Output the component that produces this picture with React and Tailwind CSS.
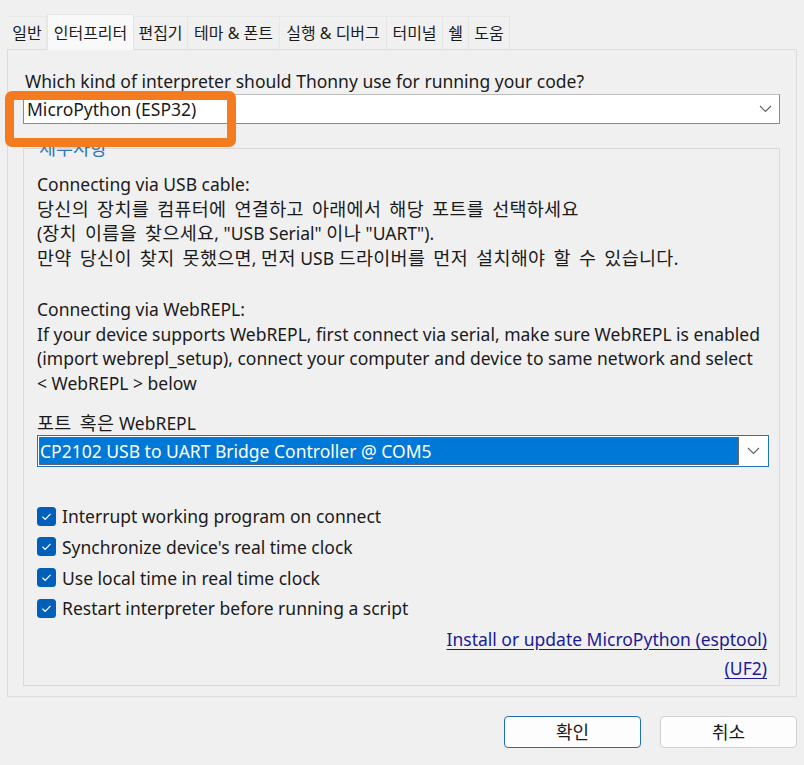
import React from 'react';

const tabs = [
  { label: '일반', w: 'w-[39px]' },
  { label: '인터프리터', w: 'w-[87px]', active: true },
  { label: '편집기', w: 'w-[54px]' },
  { label: '테마 & 폰트', w: 'w-[92px]' },
  { label: '실행 & 디버그', w: 'w-[107px]' },
  { label: '터미널', w: 'w-[56px]' },
  { label: '쉘', w: 'w-[26px]' },
  { label: '도움', w: 'w-[41px]' },
];

const options = [
  'Interrupt working program on connect',
  "Synchronize device's real time clock",
  'Use local time in real time clock',
  'Restart interpreter before running a script',
];

// Korean runs are drawn a bit larger with wider spaces, like Malgun Gothic in the original
const Mixed = ({ text }) => {
  const parts = text.split(/([\uAC00-\uD7A3](?:[\uAC00-\uD7A3\s]*[\uAC00-\uD7A3])?)/);
  return parts.map((p, i) =>
    /[\uAC00-\uD7A3]/.test(p) ? (
      <span key={i} className="text-[18.5px] tracking-[0.3px] [word-spacing:3px]">{p}</span>
    ) : (
      <span key={i}>{p}</span>
    )
  );
};

const Chevron = () => (
  <svg width="13" height="8" viewBox="0 0 13 8" fill="none">
    <polyline points="1,1 6.5,6.5 12,1" stroke="#5f5f5f" strokeWidth="1.1" />
  </svg>
);

const CheckBox = () => (
  <svg width="19" height="19" viewBox="0 0 19 19">
    <rect x="0" y="0" width="19" height="19" rx="3.5" fill="#005fb8" />
    <polyline points="5.5,9.8 8.2,12.3 13.5,6.8" fill="none" stroke="#ffffff" strokeWidth="1.2" />
  </svg>
);

const App = () => {
  return (
    <div className="relative w-[804px] h-[765px] bg-[#f0f0f0] text-[#1b1b1b] text-[17.5px] font-[family-name:'Noto_Sans','Noto_Sans_CJK_KR',sans-serif] overflow-hidden">
      {/* tab strip */}
      <div className="flex items-end pl-[8px] pt-[14px] h-[49px] text-[16px]">
        {tabs.map((t) => (
          <div
            key={t.label}
            className={`${t.w} flex items-center justify-center whitespace-nowrap border-r border-[#e2e2e2] ${
              t.active
                ? 'h-[36px] bg-[#f9f9f9] border-t border-l border-[#e6e6e6] pt-[1px] z-10 -mb-[1px]'
                : 'h-[33px] bg-[#f0f0f0] border-t border-[#e6e6e6]'
            }`}
          >
            {t.label}
          </div>
        ))}
      </div>

      {/* settings panel */}
      <div className="mx-[7px] h-[648px] border border-[#dcdcdc] bg-[#f0f0f0] pl-[15px] pr-[16px] pt-[19px]">
        <div className="pl-[2px] leading-[24px] whitespace-nowrap">Which kind of interpreter should Thonny use for running your code?</div>
        <div className="mt-[1px] h-[30px] bg-white border border-[#8a8a8a] border-t-[#bdbdbd] flex items-center justify-between pl-[3px] pr-[7px]">
          <span>MicroPython (ESP32)</span>
          <Chevron />
        </div>

        {/* details group */}
        <div className="relative mt-[24px] h-[538px] border border-[#d9d9d9] pl-[13px] pr-[10px] pt-[23px]">
          <span className="absolute left-[14px] -top-[13px] px-[1px] text-[#2f74c0] leading-[24px] text-[18.5px]">세부사항</span>

          <div className="leading-[24.5px] whitespace-nowrap">
            <div>Connecting via USB cable:</div>
            <div><Mixed text="당신의 장치를 컴퓨터에 연결하고 아래에서 해당 포트를 선택하세요" /></div>
            <div><Mixed text={'(장치 이름을 찾으세요, "USB Serial" 이나 "UART").'} /></div>
            <div><Mixed text="만약 당신이 찾지 못했으면, 먼저 USB 드라이버를 먼저 설치해야 할 수 있습니다." /></div>
          </div>

          <div className="mt-[27px] leading-[24.5px] whitespace-nowrap">
            <div>Connecting via WebREPL:</div>
            <div>If your device supports WebREPL, first connect via serial, make sure WebREPL is enabled</div>
            <div>(import webrepl_setup), connect your computer and device to same network and select</div>
            <div>&lt; WebREPL &gt; below</div>
          </div>

          <div className="mt-[16px] leading-[24px]"><Mixed text="포트 혹은 WebREPL" /></div>
          <div className="h-[32px] border border-[#1f74c4] bg-white flex items-stretch p-[1px]">
            <div className="flex-1 bg-[#0078d7] text-white flex items-center pl-[1px] whitespace-nowrap outline outline-1 outline-dotted outline-[#6a6a6a] -outline-offset-1">
              CP2102 USB to UART Bridge Controller @ COM5
            </div>
            <div className="w-[28px] flex items-center justify-center">
              <Chevron />
            </div>
          </div>

          <div className="mt-[34px]">
            {options.map((o) => (
              <div key={o} className="h-[30.67px] flex items-center gap-[6px]">
                <CheckBox />
                <span>{o}</span>
              </div>
            ))}
          </div>

          <div className="mt-[1px] flex flex-col items-end pr-[2px] leading-[29px] text-[#1a1a99]">
            <span className="underline underline-offset-[3px]">Install or update MicroPython (esptool)</span>
            <span className="underline underline-offset-[3px]">(UF2)</span>
          </div>
        </div>
      </div>

      {/* dialog buttons */}
      <div className="flex justify-end gap-[19px] pr-[7px] mt-[19px] text-[18px]">
        <button className="w-[137px] h-[32px] rounded-[4px] border border-[#1f6fb5] bg-[#fdfdfd] text-[#1b1b1b]">확인</button>
        <button className="w-[137px] h-[32px] rounded-[4px] border border-[#d0d0d0] bg-[#fdfdfd] text-[#1b1b1b]">취소</button>
      </div>

      {/* orange highlight around interpreter selector */}
      <div className="absolute left-[5px] top-[91px] w-[231px] h-[56px] border-[9px] border-[#f47b20] rounded-[7px] pointer-events-none" />
    </div>
  );
};

export default App;
